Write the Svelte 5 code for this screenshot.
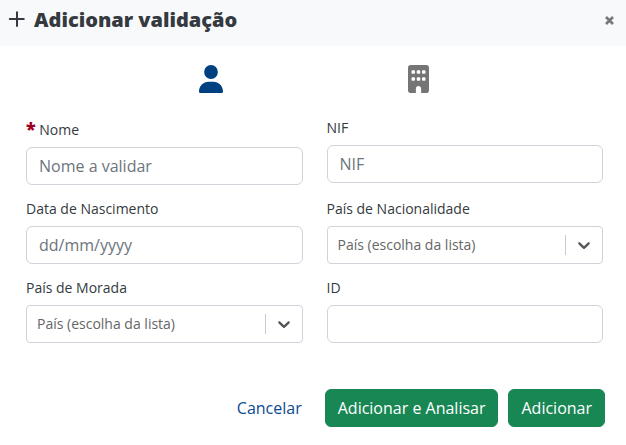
<script>
  let kind = $state('person');
  const countries = ['Portugal', 'Espanha', 'França', 'Brasil'];
</script>

{#snippet countrySelect(id)}
  <div class="select">
    <select {id}>
      <option value="">País (escolha da lista)</option>
      {#each countries as country}
        <option>{country}</option>
      {/each}
    </select>
    <div class="indicator">
      <svg width="20" height="20" viewBox="0 0 20 20" aria-hidden="true">
        <path d="M4.516 7.548c0.436-0.446 1.043-0.481 1.576 0l3.908 3.747 3.908-3.747c0.533-0.481 1.141-0.446 1.574 0 0.436 0.445 0.408 1.197 0 1.615-0.406 0.418-4.695 4.502-4.695 4.502-0.217 0.223-0.502 0.335-0.787 0.335s-0.57-0.112-0.789-0.335c0 0-4.287-4.084-4.695-4.502s-0.436-1.17 0-1.615z" />
      </svg>
    </div>
  </div>
{/snippet}

<div class="dialog" role="dialog" aria-labelledby="title">
  <header>
    <svg class="plus" width="18" height="18" viewBox="0 0 18 18" aria-hidden="true">
      <path d="M9 1.200v13.800M1.800 8h14" />
    </svg>
    <h1 id="title">Adicionar validação</h1>
    <button type="button" class="close" aria-label="Fechar">
      <svg width="11" height="11" viewBox="0 0 11 11" aria-hidden="true">
        <path d="M2 2l7 7M9 2l-7 7" />
      </svg>
    </button>
  </header>

  <form>
    <div class="kinds">
      <button type="button" class:active={kind === 'person'} aria-label="Pessoa" onclick={() => (kind = 'person')}>
        <svg width="24" height="28" viewBox="0 0 448 512" preserveAspectRatio="none" aria-hidden="true">
          <path d="M224 256A128 128 0 1 0 224 0a128 128 0 1 0 0 256zm-45.700 48C79.800 304 0 383.800 0 482.300C0 498.700 13.300 512 29.700 512H418.300c16.400 0 29.700-13.300 29.700-29.700C448 383.800 368.200 304 269.700 304H178.300z" />
        </svg>
      </button>
      <button type="button" class:active={kind === 'company'} aria-label="Empresa" onclick={() => (kind = 'company')}>
        <svg width="21" height="28" viewBox="0 0 384 512" aria-hidden="true">
          <path d="M48 0C21.500 0 0 21.500 0 48V464c0 26.500 21.500 48 48 48h96V432c0-26.500 21.500-48 48-48s48 21.500 48 48v80h96c26.500 0 48-21.500 48-48V48c0-26.500-21.500-48-48-48H48zM64 240c0-8.800 7.200-16 16-16h32c8.800 0 16 7.200 16 16v32c0 8.800-7.200 16-16 16H80c-8.800 0-16-7.200-16-16V240zm112-16h32c8.800 0 16 7.200 16 16v32c0 8.800-7.200 16-16 16H176c-8.800 0-16-7.200-16-16V240c0-8.800 7.200-16 16-16zm80 16c0-8.800 7.200-16 16-16h32c8.800 0 16 7.200 16 16v32c0 8.800-7.200 16-16 16H272c-8.800 0-16-7.200-16-16V240zM80 96h32c8.800 0 16 7.200 16 16v32c0 8.800-7.200 16-16 16H80c-8.800 0-16-7.200-16-16V112c0-8.800 7.200-16 16-16zm80 16c0-8.800 7.200-16 16-16h32c8.800 0 16 7.200 16 16v32c0 8.800-7.200 16-16 16H176c-8.800 0-16-7.200-16-16V112zM272 96h32c8.800 0 16 7.200 16 16v32c0 8.800-7.200 16-16 16H272c-8.800 0-16-7.200-16-16V112c0-8.800 7.200-16 16-16z" />
        </svg>
      </button>
    </div>

    <div class="fields">
      <div class="field">
        <label for="name" class="required"><span class="star">*</span> Nome</label>
        <input id="name" type="text" placeholder="Nome a validar" />
      </div>
      <div class="field">
        <label for="nif">NIF</label>
        <input id="nif" type="text" placeholder="NIF" />
      </div>
      <div class="field">
        <label for="birth">Data de Nascimento</label>
        <input id="birth" type="text" placeholder="dd/mm/yyyy" />
      </div>
      <div class="field">
        <label for="nationality">País de Nacionalidade</label>
        {@render countrySelect('nationality')}
      </div>
      <div class="field">
        <label for="residence">País de Morada</label>
        {@render countrySelect('residence')}
      </div>
      <div class="field">
        <label for="doc">ID</label>
        <input id="doc" type="text" />
      </div>
    </div>

    <footer>
      <button type="button" class="link">Cancelar</button>
      <button type="button" class="primary">Adicionar e Analisar</button>
      <button type="button" class="primary">Adicionar</button>
    </footer>
  </form>
</div>

<style>
  :global(body) {
    margin: 0;
    background: #fff;
  }
  .dialog,
  .dialog * {
    box-sizing: border-box;
  }
  .dialog {
    font-family: 'Open Sans', 'Noto Sans', sans-serif;
    font-size: 16px;
    line-height: 24px;
    color: #343a40;
  }
  button,
  input,
  select {
    font: inherit;
    margin: 0;
  }
  button {
    cursor: pointer;
  }
  header {
    display: flex;
    align-items: center;
    padding: 4px 8px 10px;
    min-height: 46px;
    background: #f8f9fb;
  }
  .plus {
    flex: none;
    fill: none;
    stroke: #343a40;
    stroke-width: 2;
    stroke-linecap: round;
  }
  h1 {
    margin: 0 auto 0 8px;
    font-size: 20px;
    line-height: 28px;
    font-weight: 800;
  }
  .close {
    display: flex;
    padding: 3px;
    border: 0;
    background: none;
  }
  .close path {
    fill: none;
    stroke: #777;
    stroke-width: 2.6;
  }
  form {
    padding: 19px 23px 18px 26px;
  }
  .kinds {
    display: flex;
    padding: 0 14%;
    margin-bottom: 24px;
  }
  .kinds button {
    flex: 1;
    display: flex;
    justify-content: center;
    padding: 0;
    border: 0;
    background: none;
    color: #757575;
  }
  .kinds button.active {
    color: #004080;
  }
  .kinds svg {
    fill: currentColor;
  }
  .fields {
    display: grid;
    grid-template-columns: 1fr 1fr;
    align-items: start;
    gap: 13px 24px;
  }
  .field {
    display: flex;
    flex-direction: column;
    gap: 7px;
  }
  label {
    font-size: 14px;
    line-height: 21px;
  }
  .required {
    padding-top: 2px;
  }
  .star {
    font-size: 18px;
    line-height: 0;
    font-weight: 800;
    color: #a00020;
  }
  input,
  select {
    width: 100%;
    height: 38px;
    border: 1px solid #ced4da;
    background: #fff;
    color: #343a40;
  }
  input {
    padding: 6px 12px;
    border-radius: 6px;
  }
  input::placeholder {
    color: #6c757d;
    opacity: 1;
  }
  .select {
    position: relative;
  }
  select {
    display: block;
    appearance: none;
    padding: 0 46px 0 10px;
    border-radius: 4px;
    font-size: 14px;
    color: #666;
  }
  .indicator {
    position: absolute;
    top: 9px;
    right: 1px;
    padding: 0 8px;
    border-left: 1px solid #ccc;
    pointer-events: none;
  }
  .indicator svg {
    display: block;
    fill: #555;
  }
  footer {
    display: flex;
    justify-content: flex-end;
    gap: 10px;
    margin: 46px -2px 0 0;
  }
  footer button {
    padding: 6px 12px;
    border: 1px solid transparent;
    border-radius: 6px;
    background: none;
  }
  .link {
    color: #0b4a8f;
  }
  .primary {
    background: #198754;
    border-color: #198754;
    color: #fff;
  }
</style>
